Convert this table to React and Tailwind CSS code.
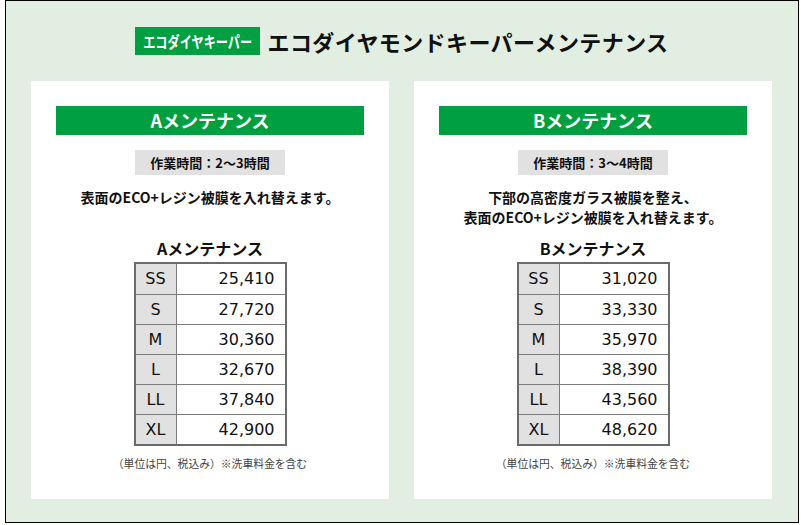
import React from "react"

const jp = { fontFamily: '"Noto Sans CJK JP", "Noto Sans", sans-serif' }
const latin = { fontFamily: '"DejaVu Sans", "Noto Sans CJK JP", sans-serif' }

const plans = [
    {
        name: "Aメンテナンス",
        time: "作業時間：2〜3時間",
        desc: ["表面のECO+レジン被膜を入れ替えます。"],
        prices: ["25,410", "27,720", "30,360", "32,670", "37,840", "42,900"],
    },
    {
        name: "Bメンテナンス",
        time: "作業時間：3〜4時間",
        desc: ["下部の高密度ガラス被膜を整え、", "表面のECO+レジン被膜を入れ替えます。"],
        prices: ["31,020", "33,330", "35,970", "38,390", "43,560", "48,620"],
    },
]

const sizes = ["SS", "S", "M", "L", "LL", "XL"]

function PriceTable({ prices }) {
    return (
        <div className="w-[153px] border-2 border-[#6a6a6a] bg-white" style={latin}>
            {sizes.map((size, i) => (
                <div key={size} className={`flex h-[30px] ${i > 0 ? "border-t border-[#7c7c7c]" : ""}`}>
                    <div className="w-[41px] flex items-center justify-center bg-[#e1e1e1] border-r border-[#7c7c7c] text-[16px] text-[#111]">
                        {size}
                    </div>
                    <div className="flex-1 flex items-center justify-end pr-[10px] text-[16px] text-[#111]">
                        {prices[i]}
                    </div>
                </div>
            ))}
        </div>
    )
}

function PlanCard({ plan }) {
    return (
        <div className="w-[358px] h-[418px] bg-white px-[25px] pt-[25px] flex flex-col items-center">
            <div className="w-full h-[29px] bg-[#009f41] flex items-center justify-center text-white font-bold text-[18px]" style={jp}>
                {plan.name}
            </div>

            <div className="mt-[15px] w-[150px] h-[25px] bg-[#e1e1e1] flex items-center justify-center font-bold text-[13px] text-[#111]" style={jp}>
                {plan.time}
            </div>

            <div className="mt-[12px] h-[40px] text-center font-bold text-[14px] leading-[20px] text-[#111]" style={jp}>
                {plan.desc.map((line) => (
                    <p key={line}>{line}</p>
                ))}
            </div>

            <p className="mt-[9px] font-bold text-[16px] leading-[24px] text-[#111]" style={jp}>
                {plan.name}
            </p>

            <div className="mt-[2px]">
                <PriceTable prices={plan.prices} />
            </div>

            <p className="mt-[9px] text-[10.8px] leading-[16px] text-[#444]" style={jp}>
                （単位は円、税込み）※洗車料金を含む
            </p>
        </div>
    )
}

export default function App() {
    return (
        <div className="w-[801px] h-[525px] bg-white">
            <div className="ml-[5px] w-[794px] h-[523px] border border-black bg-[#e1eee1] px-[25px] pt-[26px]">
                <div className="flex items-center justify-center gap-[7px] h-[28px]">
                    <div className="w-[125px] h-[28px] bg-[#009f41] flex items-center justify-center overflow-hidden">
                        <span className="inline-block text-white font-bold text-[16px] scale-x-[0.76] whitespace-nowrap" style={jp}>
                            エコダイヤキーパー
                        </span>
                    </div>
                    <h1 className="font-bold text-[22px] tracking-[0.4px] text-[#111]" style={jp}>
                        エコダイヤモンドキーパーメンテナンス
                    </h1>
                </div>

                <div className="mt-[26px] flex gap-[25px]">
                    {plans.map((plan) => (
                        <PlanCard key={plan.name} plan={plan} />
                    ))}
                </div>
            </div>
        </div>
    )
}
